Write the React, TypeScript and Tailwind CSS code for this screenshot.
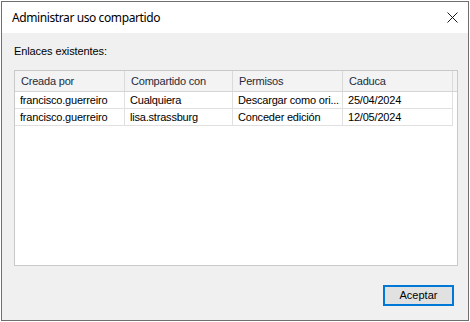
import React from 'react';

interface ShareLink {
  creator: string;
  sharedWith: string;
  permission: string;
  expires: string;
}

const links: ShareLink[] = [
  { creator: 'francisco.guerreiro', sharedWith: 'Cualquiera', permission: 'Descargar como ori...', expires: '25/04/2024' },
  { creator: 'francisco.guerreiro', sharedWith: 'lisa.strassburg', permission: 'Conceder edición', expires: '12/05/2024' },
];

const columns = ['Creada por', 'Compartido con', 'Permisos', 'Caduca'];

function CloseIcon() {
  return (
    <svg width="11" height="11" viewBox="0 0 11 11" className="block">
      <path d="M0.5 0.5 L10.5 10.5 M10.5 0.5 L0.5 10.5" stroke="#1a1a1a" strokeWidth="1" fill="none" />
    </svg>
  );
}

export default function App() {
  return (
    <div className="w-[470px] h-[322px] bg-white p-[1px] font-['Liberation_Sans',Arial,sans-serif] text-[11px] text-black">
      <div className="w-full h-full border border-[#6f6f6f] flex flex-col">
        {/* title bar */}
        <div className="h-[31px] bg-white flex items-center justify-between pl-[10px] pr-[10px]">
          <span className="font-['Noto_Sans',sans-serif] text-[12px] tracking-[-0.4px] text-black">Administrar uso compartido</span>
          <CloseIcon />
        </div>

        <div className="flex-1 bg-[#f0f0f0] flex flex-col pl-[12px] pr-[10px]">
          <div className="pt-[10px] h-[37px] tracking-[-0.1px]">Enlaces existentes:</div>

          <div className="h-[196px] border border-[#c9c9c9] bg-white flex flex-col tracking-[-0.2px]">
            <div className="grid grid-cols-[110px_108px_110px_110px] h-[21px] bg-[#f3f3f3] border-b border-[#d5d5d5]">
              {columns.map((c) => (
                <div key={c} className="flex items-center pl-[6px] border-r border-[#dadada] text-[#1e2b3b]">
                  {c}
                </div>
              ))}
            </div>
            {links.map((l) => (
              <div key={l.expires} className="grid grid-cols-[110px_108px_110px_110px] h-[17px]">
                {[l.creator, l.sharedWith, l.permission, l.expires].map((v, i) => (
                  <div
                    key={i}
                    className="flex items-center pl-[5px] border-r border-b border-[#e0e0e0] whitespace-nowrap overflow-hidden"
                  >
                    {v}
                  </div>
                ))}
              </div>
            ))}
          </div>

          <div className="flex justify-end mt-[19px] pr-[4px]">
            <button className="w-[71px] h-[21px] bg-[#e1e1e1] border-2 border-[#0078d7] text-[11px] text-black">
              Aceptar
            </button>
          </div>
        </div>
      </div>
    </div>
  );
}
